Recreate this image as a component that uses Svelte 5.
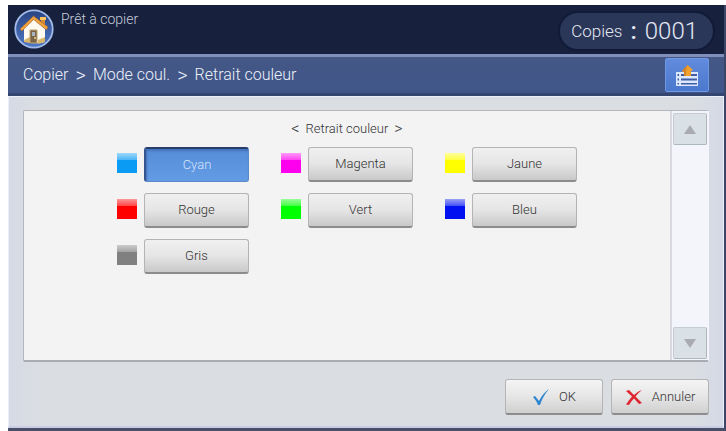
<script>
  let copies = 1
  let selected = 'Cyan'
  const path = ['Copier', 'Mode coul.', 'Retrait couleur']

  const colors = [
    { name: 'Cyan', hue: 'cyan' },
    { name: 'Magenta', hue: 'magenta' },
    { name: 'Jaune', hue: 'yellow' },
    { name: 'Rouge', hue: 'red' },
    { name: 'Vert', hue: 'green' },
    { name: 'Bleu', hue: 'blue' },
    { name: 'Gris', hue: 'gray' },
  ]

  let list

  const scroll = (amount) => {
    list.scrollBy({ top: amount, behavior: 'smooth' })
  }
</script>

<div class="screen">
  <header>
    <button class="home" aria-label="Accueil">
      <svg viewBox="0 0 40 40">
        <defs>
          <linearGradient id="disc" x1="0" y1="0" x2="0" y2="1">
            <stop offset="0" stop-color="#294381" />
            <stop offset="1" stop-color="#5078c8" />
          </linearGradient>
        </defs>
        <circle cx="20" cy="20" r="18.7" fill="url(#disc)" stroke="#a3bce9" stroke-width="1.8" />
        <path d="M27 9h4v10l-4-4z" fill="#d98b32" />
        <path d="M26 8h6v3h-6z" fill="#ffc35e" />
        <path d="M10 19L20 10l11 10v13q-11 3-21-1z" fill="#fffaf0" />
        <path d="M10 31l6-3v6l-6-1z" fill="#d8b66c" />
        <path d="M24 31l7-3v5l-7 2z" fill="#d8b66c" />
        <path d="M6 20L19.500 7 34 18l-1.500 3-13-10.500L8 22z" fill="#f0a33c" stroke="#9b5727" stroke-width=".5" />
        <path d="M16 21h7v13h-7z" fill="#79654a" stroke="#c2a36c" />
        <path d="M18 23h3v4h-3z" fill="#a8b5c0" />
        <circle cx="21" cy="29" r="1" fill="#f6d58a" />
      </svg>
    </button>
    <p class="status">Prêt à copier</p>
    <div class="copies">
      <span>Copies</span>
      <span class="colon">:</span>
      <output>{String(copies).padStart(4, '0')}</output>
    </div>
  </header>

  <nav>
    <h1>
      {#each path as step, i}
        {#if i > 0}<span class="angle">&gt;</span>{/if}
        <span>{step}</span>
      {/each}
    </h1>
    <button class="queue" aria-label="Travaux">
      <svg viewBox="0 0 24 24">
        <path d="M1 9h22v14H1z" fill="#dce8ff" />
        <path d="M6 11h16v2H6zM6 15.500h16v2H6zM6 20h16v1.500H6z" fill="#405da5" />
        <path d="M2.500 11H4v2H2.500zM2.500 15.500H4v2H2.500zM2.500 20H4v1.500H2.500z" fill="#405da5" />
        <path d="M12.500 2l5.500 5-2 1v5H9V9L7 8z" fill="#f1a02e" />
        <path d="M12.500 2L7 8l2 1v4h2V8z" fill="#d3842d" />
      </svg>
    </button>
  </nav>

  <main>
    <section>
      <div class="list" bind:this={list}>
        <h2>
          <span class="angle">&lt;</span>
          <span>Retrait couleur</span>
          <span class="angle">&gt;</span>
        </h2>
        <div class="colors">
          {#each colors as color}
            <div class="color">
              <span class="swatch {color.hue}"></span>
              <button
                class="key"
                class:active={selected === color.name}
                aria-pressed={selected === color.name}
                on:click={() => (selected = color.name)}
              >
                {color.name}
              </button>
            </div>
          {/each}
        </div>
      </div>
      <div class="scrollbar">
        <button aria-label="Vers le haut" on:click={() => scroll(-46)}>
          <svg viewBox="0 0 12 9"><path d="M6 0l6 9H0z" /></svg>
        </button>
        <button aria-label="Vers le bas" on:click={() => scroll(46)}>
          <svg viewBox="0 0 12 9"><path d="M0 0h12L6 9z" /></svg>
        </button>
      </div>
    </section>

    <footer>
      <button class="key">
        <svg viewBox="0 0 18 18">
          <path d="M1 9l2-1 4 5Q11 5 17 1 11 8 8 17H6Q4 12 1 9z" fill="#2d86d2" />
        </svg>
        OK
      </button>
      <button class="key">
        <svg viewBox="0 0 18 18">
          <path d="M1 3l3-1 5 5q4-4 8-5-4 3-6.500 6.500L17 15l-3 1-5-5.500q-3 3-5 6.500l-3-.5Q4 12 7 8.500z" fill="#de2530" />
        </svg>
        Annuler
      </button>
    </footer>
  </main>
</div>

<style>
  :global(body) {
    background: #fff;
  }
  .screen {
    margin: 5px 0 0 8px;
    border-right: 2px solid #3a4568;
    border-bottom: 3px solid #4a4f68;
    font-family: Roboto, 'Liberation Sans', sans-serif;
    font-weight: 300;
    color: #333;
  }
  button {
    padding: 0;
    border: 0;
    font: inherit;
    color: inherit;
    cursor: pointer;
  }
  svg {
    display: block;
  }
  h1,
  h2,
  p {
    margin: 0;
    font-weight: 300;
  }
  h1,
  h2 {
    display: flex;
    align-items: center;
  }
  header {
    display: flex;
    align-items: flex-start;
    height: 49px;
    padding: 0 9px 0 6px;
    box-sizing: border-box;
    background: #17213d;
    color: #e4e8f3;
  }
  .home {
    width: 40px;
    margin-top: 4px;
    border-radius: 50%;
    background: none;
  }
  .status {
    flex: 1;
    padding: 5px 7px;
    font-size: 14px;
    line-height: 18px;
    color: #c5cbda;
  }
  .copies {
    display: flex;
    align-items: center;
    gap: 8px;
    height: 40px;
    margin-top: 6px;
    padding: 0 15px 0 11px;
    box-sizing: border-box;
    border: 2px solid #111a36;
    border-radius: 20px;
    background: #2b3759;
    font-size: 17px;
  }
  .colon,
  output {
    font-size: 24px;
  }
  .colon {
    font-weight: 500;
  }
  nav {
    display: flex;
    align-items: center;
    justify-content: space-between;
    height: 42px;
    padding: 0 15px;
    box-sizing: border-box;
    border-top: 3px solid #7f8fb9;
    border-bottom: 3px solid #34456f;
    background: linear-gradient(#445785, #40568a);
    color: #edf1fa;
  }
  h1 {
    gap: 7px;
    font-size: 16px;
    line-height: 20px;
  }
  h1 .angle {
    font-size: 20px;
  }
  .queue {
    display: grid;
    place-items: center;
    width: 44px;
    height: 34px;
    border: 1px solid #6d98e6;
    border-radius: 2px;
    background: linear-gradient(#628bdc, #4b78ce);
  }
  .queue svg {
    width: 24px;
  }
  main {
    padding: 13px 14px 11px;
    border: 1px solid #eceffa;
    border-bottom: 2px solid #c9cce4;
    background: linear-gradient(90deg, #d6dae5, #dadde2 4%, #dadde2 96%, #d4d9e6);
  }
  section {
    display: flex;
    height: 252px;
    box-sizing: border-box;
    border: 1px solid #b5b7bd;
    border-right-color: #f5f6fb;
    border-bottom: 2px solid #aaacb1;
    border-radius: 2px;
    background: #f3f3f3;
  }
  .list {
    flex: 1;
    overflow: hidden;
  }
  h2 {
    justify-content: center;
    gap: 6px;
    padding: 9px 0;
    font-size: 13px;
    line-height: 18px;
  }
  h2 .angle {
    font-size: 16px;
  }
  .colors {
    display: grid;
    grid-template-columns: repeat(3, auto);
    justify-content: center;
    gap: 11px 32px;
  }
  .color {
    display: flex;
    align-items: flex-start;
    gap: 7px;
  }
  .swatch {
    width: 20px;
    height: 20px;
    margin-top: 6px;
    background-image: linear-gradient(#fff9, #fff4 35%, #fff0 36%);
  }
  .cyan {
    background-color: #0a9bf5;
  }
  .magenta {
    background-color: #f0e;
  }
  .yellow {
    background-color: #ff0;
  }
  .red {
    background-color: #f00;
  }
  .green {
    background-color: #0f0;
  }
  .blue {
    background-color: #0010f0;
  }
  .gray {
    background-color: #808080;
  }
  .key {
    display: flex;
    align-items: center;
    justify-content: center;
    width: 105px;
    height: 35px;
    border: 1px solid #b4b4b4;
    border-bottom: 2px solid #8c8c8c;
    border-radius: 3px;
    background: linear-gradient(#f0f0f0, #e5e5e5 50%, #c9c9c9);
    font-size: 13px;
    line-height: 18px;
  }
  .key.active {
    border: 1px solid #5c88ca;
    border-top: 2px solid #263c6d;
    border-left: 2px solid #36558f;
    background: linear-gradient(#568dd8, #639be4);
    box-shadow: inset 1px 2px 2px #4473b8;
    color: #d5e6ff;
  }
  .scrollbar {
    display: flex;
    flex-direction: column;
    justify-content: space-between;
    width: 34px;
    padding: 2px 1px 1px;
    border-left: 2px solid #d8d9df;
    background: #f4f5fb;
  }
  .scrollbar button {
    display: grid;
    place-items: center;
    height: 32px;
    border: 1px solid #c5ccd3;
    border-right-color: #aeb6be;
    border-bottom-color: #aeb6be;
    border-radius: 2px;
    background: #d9e0e6;
  }
  .scrollbar svg {
    width: 12px;
    fill: #a9abb0;
  }
  footer {
    display: flex;
    justify-content: flex-end;
    gap: 8px;
    padding-top: 17px;
  }
  footer .key {
    gap: 9px;
    width: 98px;
    height: 36px;
    background: linear-gradient(#f4f4f4, #e6e6e6 50%, #cfcfcf);
  }
  footer svg {
    width: 18px;
  }
</style>
